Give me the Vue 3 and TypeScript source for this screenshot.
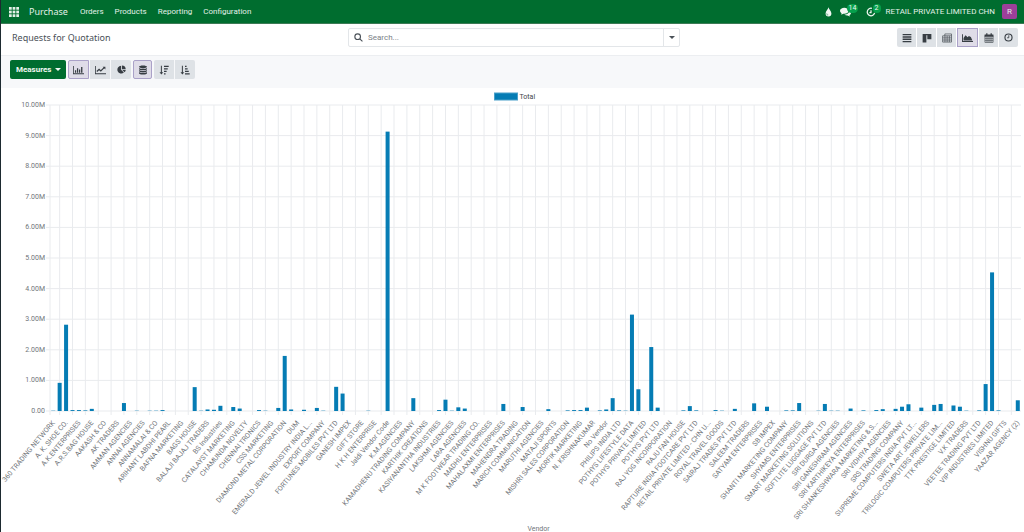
<script setup lang="ts">
import { computed, onBeforeUnmount, onMounted, ref } from 'vue'

const menus = ['Orders', 'Products', 'Reporting', 'Configuration']

const views = [
  { id: 'list', label: 'List' },
  { id: 'kanban', label: 'Kanban' },
  { id: 'pivot', label: 'Pivot' },
  { id: 'graph', label: 'Graph' },
  { id: 'calendar', label: 'Calendar' },
  { id: 'activity', label: 'Activity' },
]
const activeView = ref('graph')
const chartType = ref('bar')
const stacked = ref(true)
const search = ref('')

// Every second vendor gets a label on the axis.
const labels = [
  '360 TRADING NETWORK', 'A. K. SHOE CO.', 'A.K.ENTERPRISES', 'A.R.S.BAG HOUSE', 'AAKASH & CO',
  'AK TRADERS', 'AMMAN AGENCIES', 'ANNAI AGENCIES', 'ANNAMALAI & CO', 'ARIHANT LABDHI PEARL',
  'BAFNA MARKETING', 'BAGS HOUSE', 'BALAJI BAJAJ TRADERS', 'BS Industries', 'CATALAYST MARKETING',
  'CHAMUNDA NOVELTY', 'CHENNAI TRONICS', 'CSS MARKETING', 'DIAMOND METAL CORPORATION', 'DUM',
  'EMERALD JEWEL INDUSTRY INDIA L...', 'EXPORT COMPANY', 'FORTUNES MOBILES PVT LTD', 'GANESH IMPEX',
  'GIFT STORE', 'H K H ENTERPRISE', 'Jaldi Vendor Code', 'K.M.AGENCIES', 'KAMADHENU TRADING COMPANY',
  'KARTHIK CREATIONS', 'KASIYANANTHA INDUSTRIES', 'LAKSHMI AGENCIES', 'LARA AGENCIES',
  'M K FOOTWEAR TRADING CO.', 'MADHU ENTERPRISES', 'MAHALAXMI ENTERPRISES', 'MAHENDRA TRADING',
  'MARICH COMMUNICATION', 'MARUTHI AGENCIES', 'MATAJI SPORTS', 'MISHRI SALES CORPORATION',
  'MORFIK MARKETING', 'N. KRISHNAKUMAR', 'No Vendor', 'PHILIPS INDIA LTD', 'POTHYS LIFESTYLE DATA',
  'POTHYS PRIVATE LIMITED', 'POTHYS PVT LTD', 'RAJ YOG INCORPORATION', 'RAJU FAN HOUSE',
  'RAPTURE INDIA FOOTCARE PVT LTD', 'RETAIL PRIVATE LIMITED - CHN U...', 'ROYAL TRAVEL GOODS',
  'SAIRAJ TRADES PVT LTD', 'SALEEM TRADERS', 'SATYAM ENTERPRISES', 'SB IMPEX',
  'SHANTI MARKETING COMPANY', 'SHYAMS ENTERPRISES', 'SMART MARKETING SOLUTIONS',
  'SOFTLITE LUGGAGE PVT LTD', 'SRI DURGA AGENCIES', 'SRI GANESHRAM AGENCIES',
  'SRI KARTHIKEYA ENTERPRISES', 'SRI SHANKESHWARA MARKETING & S...', 'SRI VIDHIYA AGENCIES',
  'SRS TRADING COMPANY', 'SUPREME COMPUTERS INDIA PVT LT...', 'SWETA ART JEWELLERS',
  'TRILOGIC COMPUTERS PRIVATE LIM...', 'TTK PRESTIGE LIMITED', 'V.K TRADERS',
  'VEETEE TRADING PVT LTD', 'VIP INDUSTRIES LIMITED', 'VISHNU GIFTS', 'YAAZAR AGENCY (2)',
]
const vendorCount = 151

// Totals in millions, keyed by vendor position.
const totals: [number, number][] = [
  [0, 0.01], [1, 0.92], [2, 2.82], [3, 0.03], [4, 0.03], [5, 0.02], [6, 0.07], [11, 0.26], [13, 0.01],
  [15, 0.01], [16, 0.01], [17, 0.03], [22, 0.78], [23, 0.01], [24, 0.05], [25, 0.04], [26, 0.17],
  [28, 0.13], [29, 0.08], [32, 0.03], [33, 0.01], [35, 0.1], [36, 1.8], [37, 0.05], [39, 0.04],
  [41, 0.1], [42, 0.01], [44, 0.79], [45, 0.57], [49, 0.01], [52, 9.13], [56, 0.42], [60, 0.03],
  [61, 0.37], [62, 0.01], [63, 0.12], [64, 0.08], [70, 0.23], [73, 0.13], [77, 0.06], [80, 0.02],
  [81, 0.03], [82, 0.03], [83, 0.11], [85, 0.02], [86, 0.05], [87, 0.42], [88, 0.02], [89, 0.01],
  [90, 3.15], [91, 0.71], [93, 2.09], [94, 0.11], [98, 0.02], [99, 0.16], [100, 0.02], [103, 0.03],
  [104, 0.01], [106, 0.07], [109, 0.25], [111, 0.14], [114, 0.02], [115, 0.02], [116, 0.26],
  [119, 0.01], [120, 0.23], [121, 0.01], [122, 0.01], [124, 0.08], [126, 0.02], [128, 0.03],
  [129, 0.06], [131, 0.07], [132, 0.14], [133, 0.22], [135, 0.11], [137, 0.2], [138, 0.23],
  [140, 0.18], [141, 0.14], [142, 0.01], [144, 0.02], [145, 0.88], [146, 4.53], [147, 0.02], [150, 0.35],
]

const chartBox = ref<HTMLElement | null>(null)
const width = ref(1023)
const height = ref(444)
let observer: ResizeObserver | undefined

function measure() {
  if (!chartBox.value) return
  width.value = chartBox.value.clientWidth
  height.value = chartBox.value.clientHeight
}
onMounted(() => {
  measure()
  observer = new ResizeObserver(measure)
  if (chartBox.value) observer.observe(chartBox.value)
})
onBeforeUnmount(() => observer?.disconnect())

const left = 49
const top = 17
const right = computed(() => width.value - 3)
const bottom = computed(() => height.value - 121)
const step = computed(() => (right.value - left) / vendorCount)
const middle = computed(() => (left + right.value) / 2)

const yTicks = computed(() =>
  Array.from({ length: 11 }, (_, i) => ({
    text: i === 0 ? '0.00' : `${i}.00M`,
    y: bottom.value - ((bottom.value - top) * i) / 10,
  })),
)
const xTicks = computed(() =>
  labels.map((text, i) => ({ text, x: left + step.value * (2 * i + 0.5) })),
)
const gridX = computed(() => [
  left,
  ...labels.slice(1).map((_, i) => left + step.value * (2 * i + 1.5)),
])
const bars = computed(() =>
  totals.map(([i, v]) => {
    const h = ((bottom.value - top) * v) / 10
    return { x: left + step.value * (i + 0.5) - 2, y: bottom.value - h, h }
  }),
)
</script>

<template>
  <div class="page">
    <header class="navbar">
      <button class="apps" aria-label="Apps">
        <svg viewBox="0 0 11 11" width="10" height="10">
          <template v-for="r in 3" :key="r">
            <rect v-for="c in 3" :key="c" :x="(c - 1) * 4" :y="(r - 1) * 4" width="3" height="3" />
          </template>
        </svg>
      </button>
      <a href="#" class="brand">Purchase</a>
      <nav class="menus">
        <a v-for="m in menus" :key="m" href="#">{{ m }}</a>
      </nav>
      <div class="systray">
        <button class="tray" aria-label="Theme">
          <svg viewBox="0 0 12 16" width="7" height="10"><path d="M6 0C5.4 3.6 1 6.500 1 10.600a5 5 0 0 0 10 0C11 6.500 6.600 3.600 6 0Z" /><path class="shine" d="M3 10.500a2 2 0 0 0 2.500 2.500" /></svg>
        </button>
        <button class="tray chat" aria-label="Messages">
          <svg viewBox="0 0 18 16" width="11" height="10"><path d="M7 1C3.100 1 0 3.200 0 6c0 1.600 1 3 2.600 3.900C2.400 10.800 1.900 11.500 1.300 12.200c1.800-.2 3.200-.8 4.300-1.500C6.100 10.900 6.500 11 7 11c3.900 0 7-2.200 7-5S10.900 1 7 1Z" /><path d="M15.200 5.400c.1 4-3.600 6.800-8 6.800 1.200 1.100 3 1.800 5.100 1.700 1.200.8 2.600 1.300 4.400 1.500-.6-.6-1-1.300-1.200-2.100C17 12.400 18 11 18 9.500c0-1.700-1.100-3.200-2.800-4.100Z" /></svg>
          <span class="badge">14</span>
        </button>
        <button class="tray clock" aria-label="Activities">
          <svg viewBox="0 0 16 16" width="10" height="10"><path class="ring" d="M9.500 2.200A6 6 0 1 0 13.800 9.500M8 5v4H5.500" /></svg>
          <span class="badge">2</span>
        </button>
        <button class="company">RETAIL PRIVATE LIMITED CHN</button>
        <button class="avatar" aria-label="User menu">R</button>
      </div>
    </header>

    <section class="panel">
      <h1>Requests for Quotation</h1>
      <div class="search" role="search">
        <label for="q" aria-label="Search">
          <svg viewBox="0 0 16 16" width="9" height="9"><circle cx="6.500" cy="6.500" r="5" /><path d="M10.300 10.300 15 15" /></svg>
        </label>
        <input id="q" v-model="search" type="text" placeholder="Search..." />
        <button aria-label="Search options"><i class="caret"></i></button>
      </div>
      <div class="views">
        <button
          v-for="v in views"
          :key="v.id"
          class="tool"
          :class="{ active: activeView === v.id }"
          :aria-label="v.label"
          @click="activeView = v.id"
        >
          <svg v-if="v.id === 'list'" viewBox="0 0 16 16" width="10" height="10"><path d="M1 1.500h14v2.200H1zM1 5.200h14v2.200H1zM1 8.900h14v2.200H1zM1 12.600h14v2.200H1z" /></svg>
          <svg v-else-if="v.id === 'kanban'" viewBox="0 0 16 16" width="10" height="10"><path d="M1 1.500h14v2H1zM1 3h6v12H1zM8.500 3H15v7H8.500z" /></svg>
          <svg v-else-if="v.id === 'pivot'" viewBox="0 0 16 16" width="10" height="10"><path class="line" d="M4.500 4.500V1.500h10.700v13H1v-10h14M1 7.800h14M1 11.200h14M4.700 4.500v10M8.200 4.500v10M11.700 4.500v10" /></svg>
          <svg v-else-if="v.id === 'graph'" viewBox="0 0 18 16" width="11" height="10"><path d="M0 2h1.500v11H18v1.500H0zM2.500 12V8.200L5.800 3.600l3.400 3 2-1.800 3.300 1.500L17 12z" /></svg>
          <svg v-else-if="v.id === 'calendar'" viewBox="0 0 16 16" width="10" height="10"><path d="M1 2.500h14V6H1zM3.500.5h2v3h-2zM10.500.5h2v3h-2z" /><path class="line" d="M1.500 4v11h13V4M1.500 8.500h13M1.500 11.700h13M4.800 6v9M8 6v9M11.200 6v9" /></svg>
          <svg v-else viewBox="0 0 16 16" width="9" height="9"><circle class="bold" cx="8" cy="8" r="6.300" /><path class="medium" d="M8.500 4v4.500H5.500" /></svg>
        </button>
      </div>
    </section>

    <section class="toolbar">
      <button class="measures">Measures <i class="caret"></i></button>
      <div class="group">
        <button class="tool" :class="{ active: chartType === 'bar' }" aria-label="Bar chart" @click="chartType = 'bar'">
          <svg viewBox="0 0 18 16" width="11" height="10"><path d="M0 1.500h1.300v12H18v1.300H0zM3.200 8.500h2v4h-2zM6.500 5h2v7.500h-2zM9.800 7h2v5.500h-2zM13.200 3h2.200v9.500h-2.200z" /></svg>
        </button>
        <button class="tool" :class="{ active: chartType === 'line' }" aria-label="Line chart" @click="chartType = 'line'">
          <svg viewBox="0 0 18 16" width="11" height="10"><path d="M0 1.500h1.300v12H18v1.300H0zM12.500 2.500H17V7z" /><path class="bold" d="m3 10.500 3.700-3.700 2.800 2.800L15 4.200" /></svg>
        </button>
        <button class="tool" :class="{ active: chartType === 'pie' }" aria-label="Pie chart" @click="chartType = 'pie'">
          <svg viewBox="0 0 16 16" width="9" height="9"><path d="M7.300 1.500V8.300l4.900 4.900A6.800 6.800 0 1 1 7.300 1.500ZM8.800.8A6.800 6.800 0 0 1 15.500 7.500H8.800ZM9.500 8.800h6a6.500 6.500 0 0 1-2 4.200Z" /></svg>
        </button>
      </div>
      <button class="tool" :class="{ active: stacked }" aria-label="Stacked" @click="stacked = !stacked">
        <svg viewBox="0 0 14 16" width="8" height="10"><path d="M7 0c3.900 0 7 1.100 7 2.400S10.900 4.800 7 4.800 0 3.700 0 2.400 3.100 0 7 0ZM0 4.300C1.400 5.400 4 6 7 6s5.600-.6 7-1.700v1.800c0 1.300-3.100 2.400-7 2.400S0 7.400 0 6.100ZM0 8c1.400 1.100 4 1.700 7 1.700S12.600 9.100 14 8v1.800c0 1.300-3.100 2.400-7 2.400S0 11.100 0 9.800ZM0 11.700c1.400 1.100 4 1.700 7 1.700s5.600-.6 7-1.700v1.900C14 14.900 10.900 16 7 16s-7-1.100-7-2.400Z" /></svg>
      </button>
      <div class="group">
        <button class="tool" aria-label="Descending">
          <svg viewBox="0 0 16 16" width="10" height="10"><path d="M3 1h1.600v10.500h2.200L3.800 15 .8 11.500H3zM8 1h7.500v2H8zM8 5h6v2H8zM8 9h4.200v2H8zM8 13h2.500v2H8z" /></svg>
        </button>
        <button class="tool" aria-label="Ascending">
          <svg viewBox="0 0 16 16" width="10" height="10"><path d="M3 1h1.600v10.500h2.200L3.800 15 .8 11.500H3zM8 1h2.500v2H8zM8 5h4.200v2H8zM8 9h6v2H8zM8 13h7.500v2H8z" /></svg>
        </button>
      </div>
    </section>

    <main ref="chartBox" class="chart">
      <svg :viewBox="`0 0 ${width} ${height}`" role="img" aria-label="Total by vendor">
        <g class="grid">
          <line v-for="t in yTicks" :key="t.text" :x1="left - 4" :x2="right" :y1="t.y" :y2="t.y" />
          <line v-for="x in gridX" :key="x" :x1="x" :x2="x" :y1="top" :y2="bottom + 4" />
        </g>
        <g class="bars">
          <rect v-for="b in bars" :key="b.x" :x="b.x" :y="b.y" width="4" :height="b.h" />
        </g>
        <rect class="swatch" :x="middle - 41" y="5" width="23" height="7" />
        <text class="legend" :x="middle - 16" y="11">Total</text>
        <g class="axis">
          <text v-for="t in yTicks" :key="t.text" :x="left - 5" :y="t.y + 2" text-anchor="end">{{ t.text }}</text>
          <text
            v-for="t in xTicks"
            :key="t.text"
            text-anchor="end"
            :transform="`translate(${t.x + 2} ${bottom + 12}) rotate(-50)`"
          >{{ t.text }}</text>
          <text :x="middle + 3" :y="height - 1" text-anchor="middle">Vendor</text>
        </g>
      </svg>
    </main>
  </div>
</template>

<style>
body {
  margin: 0;
}
</style>

<style scoped>
.page {
  display: flex;
  flex-direction: column;
  box-sizing: border-box;
  height: 100vh;
  min-height: 400px;
  overflow: hidden;
  border-left: 1px solid #1d2a30;
  background: #fff;
  color: #495057;
  font-family: Roboto, "Noto Sans", sans-serif;
  font-size: 8px;
}
button,
input {
  margin: 0;
  padding: 0;
  border: 0;
  background: none;
  color: inherit;
  font: inherit;
}
a {
  color: inherit;
  text-decoration: none;
}
svg {
  display: block;
  fill: currentColor;
}
.navbar {
  display: flex;
  align-items: center;
  flex: none;
  box-sizing: border-box;
  height: 24px;
  padding: 0 7px 0 8px;
  border-bottom: 1px solid #3c7a55;
  background: #006d2f;
  color: #e3f0e8;
}
.brand {
  margin-left: 10px;
  font-family: "Noto Sans", sans-serif;
  font-size: 9px;
}
.menus {
  display: flex;
  gap: 11px;
  margin-left: 12px;
}
.systray {
  display: flex;
  align-items: center;
  margin-left: auto;
}
.tray {
  position: relative;
  color: #f1f7f3;
}
.chat {
  margin-left: 8px;
}
.clock {
  margin-left: 15px;
}
.badge {
  position: absolute;
  top: -3px;
  left: 7px;
  padding: 0 2px;
  border-radius: 5px;
  background: #06a04c;
  font-size: 7px;
  line-height: 9px;
}
.shine {
  fill: none;
  stroke: #006d2f;
}
.ring {
  fill: none;
  stroke: currentColor;
  stroke-width: 2;
}
.company {
  margin-left: 10px;
}
.avatar {
  width: 15px;
  height: 15px;
  margin-left: 7px;
  border-radius: 2px;
  background: #9c3f9a;
}
.panel {
  display: grid;
  grid-template-columns: 1fr minmax(100px, 332px) 1fr;
  align-items: center;
  flex: none;
  box-sizing: border-box;
  height: 32px;
  padding: 0 6px 4px 9px;
  border-bottom: 1px solid #eceef1;
}
h1 {
  margin: 0;
  padding-left: 2px;
  font-family: "Noto Sans", sans-serif;
  font-size: 9px;
  font-weight: 400;
}
.search {
  display: flex;
  align-items: stretch;
  box-sizing: border-box;
  height: 19px;
  border: 1px solid #e3e6e9;
  border-radius: 2px;
}
.search label {
  display: flex;
  align-items: center;
  padding: 0 5px;
}
.search svg {
  fill: none;
  stroke: #495057;
  stroke-width: 2;
}
.search input {
  flex: 1;
  min-width: 0;
  outline: none;
}
.search input::placeholder {
  color: #7b8187;
  opacity: 1;
}
.search button {
  display: grid;
  place-items: center;
  width: 16px;
  border-left: 1px solid #e3e6e9;
}
.caret {
  display: inline-block;
  border: 3px solid transparent;
  border-top-color: currentColor;
  border-bottom: 0;
}
.views,
.group {
  display: flex;
  gap: 1px;
}
.views {
  justify-self: end;
}
.tool {
  display: grid;
  place-items: center;
  box-sizing: border-box;
  width: 20px;
  height: 19px;
  background: #dee2e6;
  color: #373d43;
}
.tool.active {
  border: 1px solid #aaa1c8;
  background: #dfdce8;
}
.views .tool,
.toolbar > .tool {
  width: 19px;
}
.views .tool.active,
.group .tool.active {
  width: 21px;
}
.toolbar > .tool,
.tool:first-child {
  border-top-left-radius: 2px;
  border-bottom-left-radius: 2px;
}
.toolbar > .tool,
.tool:last-child {
  border-top-right-radius: 2px;
  border-bottom-right-radius: 2px;
}
.line,
.medium,
.bold {
  fill: none;
  stroke: currentColor;
  stroke-width: 1;
}
.medium {
  stroke-width: 1.5;
}
.bold {
  stroke-width: 2;
}
.toolbar {
  display: flex;
  align-items: center;
  gap: 2px;
  flex: none;
  box-sizing: border-box;
  height: 32px;
  padding: 0 9px 5px;
  background: #f7f8fa;
}
.measures {
  display: flex;
  align-items: center;
  gap: 4px;
  height: 19px;
  padding: 0 5px 0 6px;
  border-radius: 2px;
  background: #006d2f;
  color: #f1f7f3;
  font-weight: 700;
}
.chart {
  flex: 1;
  min-height: 0;
}
.chart svg {
  width: 100%;
  height: 100%;
  font-size: 7px;
}
.grid line {
  stroke: #e9ebee;
  stroke-width: 1;
}
.bars,
.swatch {
  fill: #057cb4;
}
.swatch {
  stroke: #4aa0c9;
}
.legend {
  fill: #40454a;
}
.axis {
  fill: #71757a;
}
</style>
